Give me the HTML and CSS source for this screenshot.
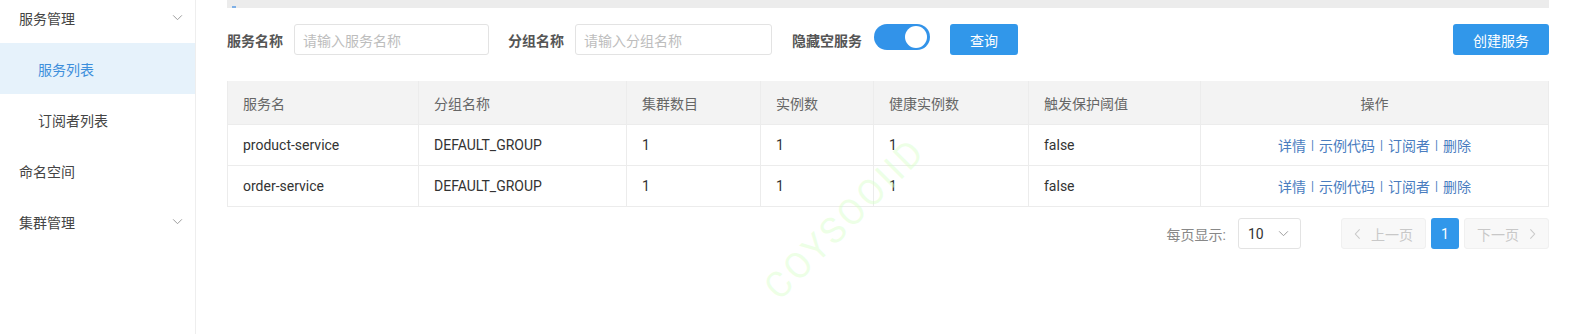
FILE: index.html
```html
<!DOCTYPE html>
<html lang="zh">
<head>
<meta charset="utf-8">
<link rel="stylesheet" href="styles.css">
</head>
<body>
<div class="app">
  <aside class="sidebar">
    <div class="menu first"><span>服务管理</span><svg class="chev" viewBox="0 0 12 8"><path d="M1 1.5 L6 6.5 L11 1.5" fill="none" stroke="#999" stroke-width="1.1"/></svg></div>
    <div class="menu sub active"><span>服务列表</span></div>
    <div class="menu sub"><span>订阅者列表</span></div>
    <div class="menu"><span>命名空间</span></div>
    <div class="menu"><span>集群管理</span><svg class="chev" viewBox="0 0 12 8"><path d="M1 1.5 L6 6.5 L11 1.5" fill="none" stroke="#999" stroke-width="1.1"/></svg></div>
  </aside>
  <main class="main">
    <div class="topbar"><span class="mark"></span></div>
    <div class="search">
      <label class="lbl">服务名称</label>
      <div class="input w1">请输入服务名称</div>
      <label class="lbl l2">分组名称</label>
      <div class="input w2">请输入分组名称</div>
      <label class="lbl l3">隐藏空服务</label>
      <div class="switch"><span class="knob"></span></div>
      <button class="btn query">查询</button>
      <div class="spacer"></div>
      <button class="btn create">创建服务</button>
    </div>
    <div class="table">
      <div class="row head">
        <div class="c c1">服务名</div><div class="c c2">分组名称</div><div class="c c3">集群数目</div><div class="c c4">实例数</div><div class="c c5">健康实例数</div><div class="c c6">触发保护阈值</div><div class="c c7 center">操作</div>
      </div>
      <div class="row">
        <div class="c c1">product-service</div><div class="c c2">DEFAULT_GROUP</div><div class="c c3">1</div><div class="c c4">1</div><div class="c c5">1</div><div class="c c6">false</div>
        <div class="c c7 center ops"><a>详情</a><i>|</i><a>示例代码</a><i>|</i><a>订阅者</a><i>|</i><a>删除</a></div>
      </div>
      <div class="row">
        <div class="c c1">order-service</div><div class="c c2">DEFAULT_GROUP</div><div class="c c3">1</div><div class="c c4">1</div><div class="c c5">1</div><div class="c c6">false</div>
        <div class="c c7 center ops"><a>详情</a><i>|</i><a>示例代码</a><i>|</i><a>订阅者</a><i>|</i><a>删除</a></div>
      </div>
    </div>
    <div class="pager">
      <span class="ptext">每页显示:</span>
      <div class="select"><span>10</span><svg class="chev2" viewBox="0 0 12 8"><path d="M1 1.5 L6 6.5 L11 1.5" fill="none" stroke="#999" stroke-width="1.1"/></svg></div>
      <div class="pbtn prev"><svg class="arr" viewBox="0 0 8 14"><path d="M6.5 1.5 L1.5 7 L6.5 12.5" fill="none" stroke="#c8c8c8" stroke-width="1.2"/></svg><span>上一页</span></div>
      <div class="pnum">1</div>
      <div class="pbtn next"><span>下一页</span><svg class="arr" viewBox="0 0 8 14"><path d="M1.5 1.5 L6.5 7 L1.5 12.5" fill="none" stroke="#c8c8c8" stroke-width="1.2"/></svg></div>
    </div>
  </main>
  <div class="watermark">COYSOOIID</div>
</div>
</body>
</html>
```
FILE: styles.css
```css
* { box-sizing: border-box; }
html, body { margin: 0; padding: 0; background: #fff; }
body {
  font-family: Roboto, "Noto Sans CJK SC", sans-serif;
  font-size: 14px;
  color: #333;
  width: 1579px;
  height: 334px;
  overflow: hidden;
}
.app {
  display: grid;
  grid-template-columns: 196px 1fr;
  height: 334px;
  position: relative;
}
.sidebar {
  border-right: 1px solid #eeeeee;
  height: 334px;
  overflow: hidden;
}
.menu {
  height: 51px;
  display: flex;
  align-items: center;
  padding-left: 19px;
  padding-right: 12px;
  color: #444;
}
.menu.first { margin-top: -8px; }
.menu span { flex: 1; }
.menu.sub { padding-left: 38px; }
.menu.active { background: #e6f2fb; color: #3d8fdb; }
.chev { width: 11px; height: 7px; }

.main {
  padding: 0 30px 0 31px;
}
.topbar {
  height: 8px;
  background: #ececec;
  position: relative;
}
.mark {
  position: absolute;
  left: 5px;
  bottom: 0;
  width: 4px;
  height: 2px;
  background: #7fb0e6;
}
.search {
  display: flex;
  align-items: center;
  margin-top: 16px;
  height: 31px;
}
.lbl { font-weight: bold; color: #555; white-space: nowrap; }
.input {
  height: 31px;
  border: 1px solid #e3e3e3;
  border-radius: 3px;
  margin-left: 11px;
  padding-left: 8px;
  display: flex;
  align-items: center;
  color: #bdbdbd;
}
.w1 { width: 195px; }
.w2 { width: 197px; }
.l2 { margin-left: 19px; }
.l3 { margin-left: 20px; }
.switch {
  width: 56px;
  height: 26px;
  border-radius: 13px;
  background: #3293e9;
  margin-left: 12px;
  position: relative;
  margin-top: -5px;
}
.knob {
  position: absolute;
  right: 3px;
  top: 2px;
  width: 22px;
  height: 22px;
  border-radius: 50%;
  background: #fff;
}
.btn {
  height: 31px;
  border: none;
  border-radius: 3px;
  background: #3197ea;
  color: #fff;
  font-family: Roboto, "Noto Sans CJK SC", sans-serif;
  font-size: 14px;
  padding: 0;
}
.query { width: 68px; margin-left: 20px; }
.create { width: 96px; }
.spacer { flex: 1; }

.table {
  margin-top: 26px;
  border: 1px solid #ececec;
  border-top: none;
}
.row {
  display: grid;
  grid-template-columns: 190px 208px 134px 113px 155px 172px 1fr;
  height: 41px;
  border-top: 1px solid #ececec;
}
.row.head { height: 43px; background: #f3f3f3; border-top: none; color: #666; }
.c {
  display: flex;
  align-items: center;
  padding-left: 15px;
  border-left: 1px solid #ececec;
  white-space: nowrap;
}
.c1 { border-left: none; }
.center { justify-content: center; padding-left: 0; }
.ops a { color: #4a7dbf; }
.ops i { font-style: normal; color: #4a7dbf; font-size: 12px; margin: 0 5px; }

.pager {
  display: flex;
  align-items: center;
  justify-content: flex-end;
  margin-top: 11px;
  height: 31px;
}
.ptext { color: #888; margin-right: 12px; }
.select {
  width: 63px;
  height: 31px;
  border: 1px solid #e3e3e3;
  border-radius: 3px;
  display: flex;
  align-items: center;
  justify-content: space-between;
  padding: 0 11px 0 9px;
  color: #333;
}
.chev2 { width: 11px; height: 7px; }
.pbtn {
  height: 31px;
  border: 1px solid #f0f0f0;
  background: #f8f8f8;
  border-radius: 3px;
  color: #c8c8c8;
  display: flex;
  align-items: center;
  justify-content: center;
  gap: 10px;
}
.prev { width: 85px; margin-left: 40px; }
.next { width: 85px; }
.arr { width: 7px; height: 12px; }
.pnum {
  width: 28px;
  height: 31px;
  background: #3197ea;
  color: #fff;
  border-radius: 3px;
  display: flex;
  align-items: center;
  justify-content: center;
  margin: 0 5px;
}
.watermark {
  position: absolute;
  left: 740px;
  top: 198px;
  font-size: 36px;
  letter-spacing: 3px;
  color: rgba(215, 255, 200, 0.45);
  transform: rotate(-45deg);
  pointer-events: none;
  white-space: nowrap;
}
```
